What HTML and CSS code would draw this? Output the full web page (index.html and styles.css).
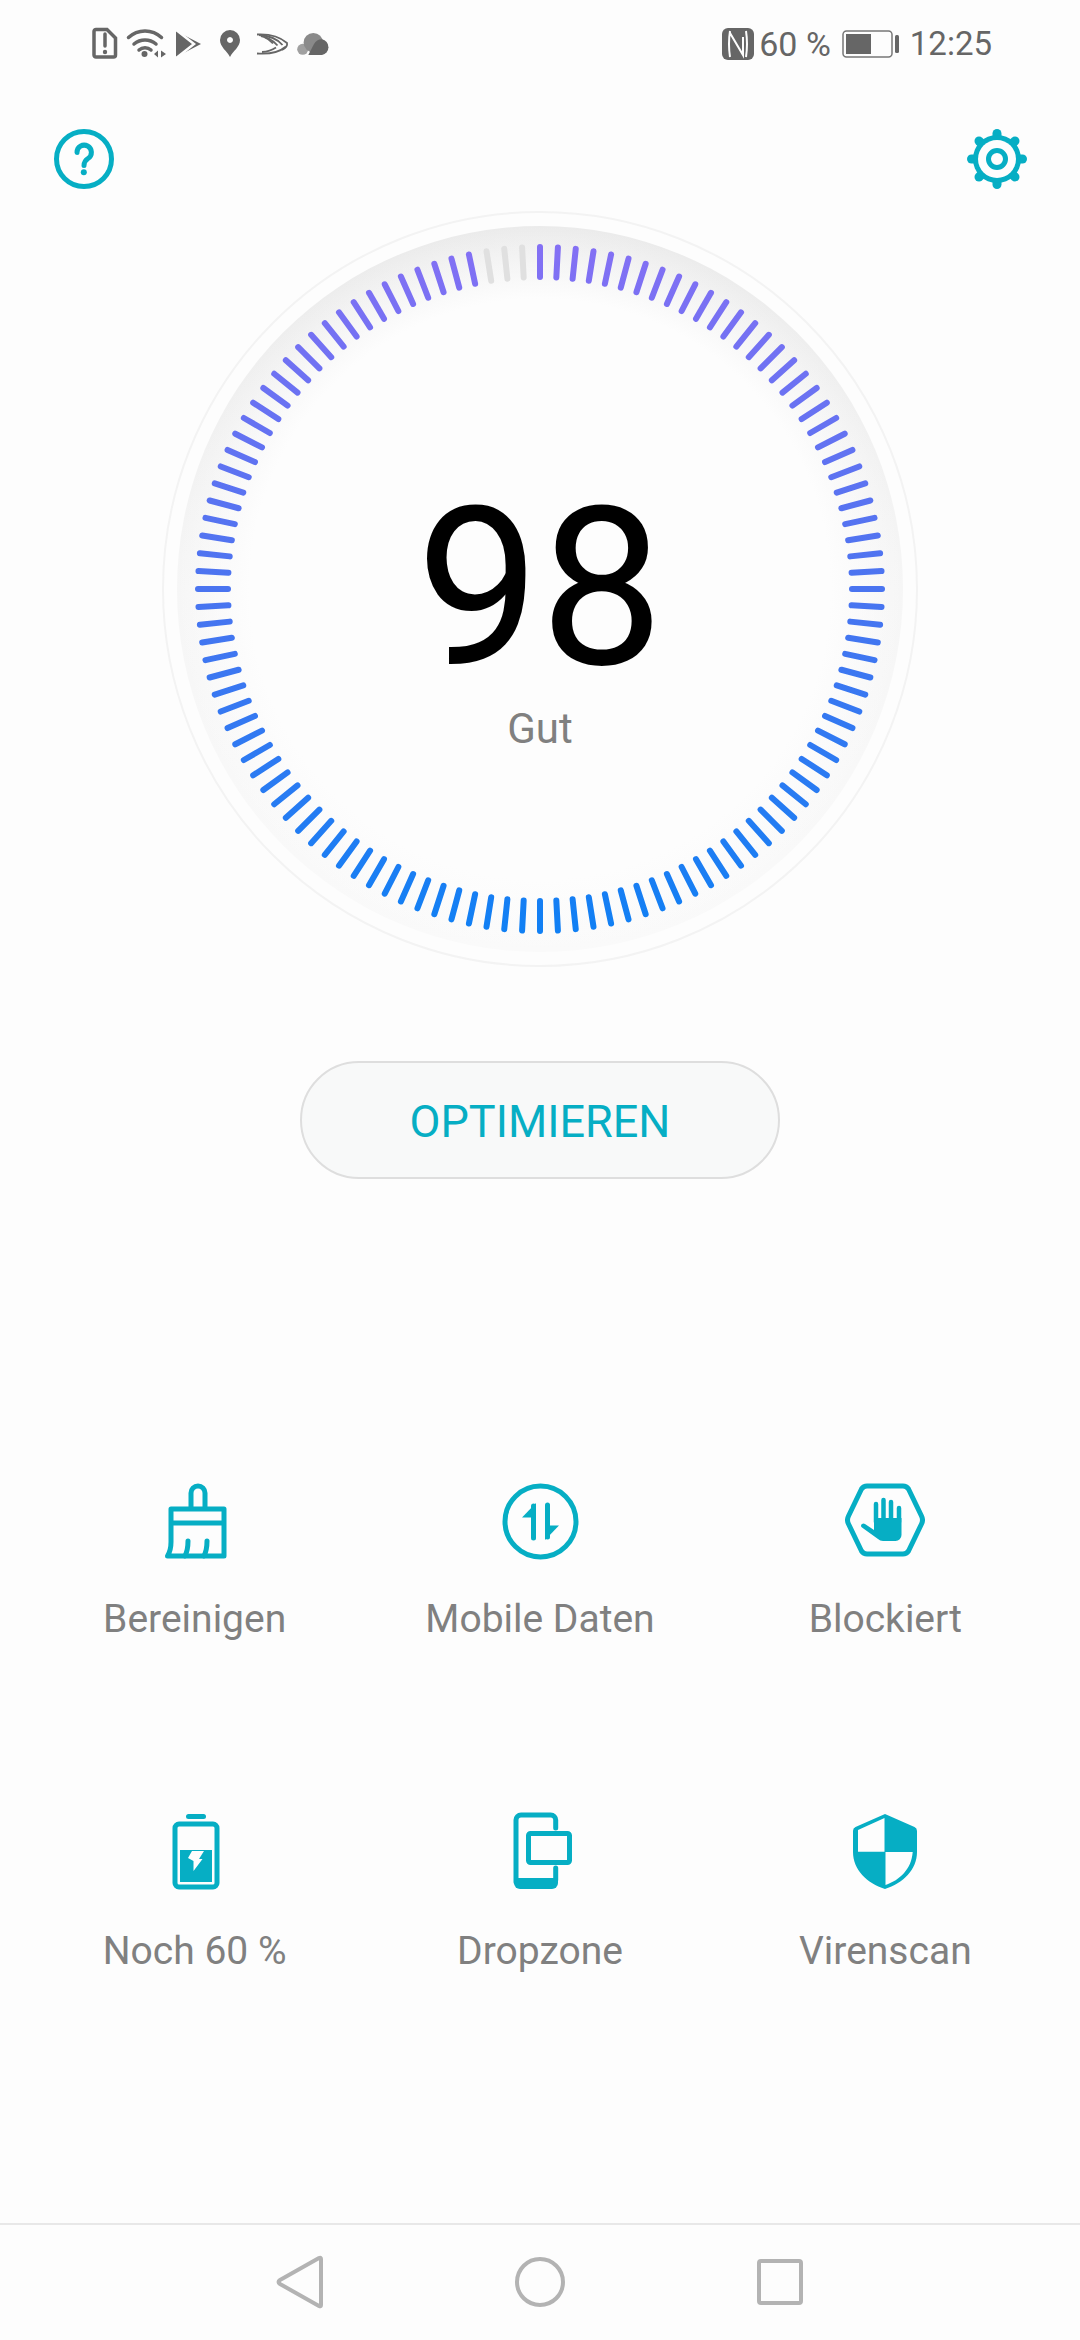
FILE: index.html
```html
<!DOCTYPE html>
<html lang="de">
<head>
    <meta charset="UTF-8">
    <meta name="viewport" content="width=device-width, initial-scale=1.0">
    <title>Telefonmanager</title>
    <link rel="stylesheet" href="styles.css">
</head>
<body>
    <!-- Status bar -->
    <header class="status-bar">
        <svg class="status-icons" viewBox="0 0 240 40" aria-hidden="true">
            <!-- SIM alert -->
            <path class="st-line" d="M4 5.500 H15 L23.500 14 V31 a2 2 0 0 1 -2 2 H4 a2 2 0 0 1 -2 -2 V7.500 a2 2 0 0 1 2 -2 Z"/>
            <path class="st-line" d="M13 10 V22"/>
            <circle class="st-fill" cx="13" cy="28" r="2.200"/>
            <!-- Wifi -->
            <path class="st-line" d="M36.500 13.500 a24 24 0 0 1 33 0"/>
            <path class="st-line" d="M42 20 a17 17 0 0 1 22 0"/>
            <path class="st-line" d="M47 26 a9 9 0 0 1 12 0"/>
            <circle class="st-fill" cx="52.500" cy="30" r="3"/>
            <path class="st-fill" d="M62 30 L66 26.500 V33.500 Z M69 26.500 L74 30 L69 33.500 Z"/>
            <!-- Play store -->
            <path class="st-fill" d="M84 7 L109 20 L84 33 Z"/>
            <path class="st-cut" d="M83 5 L102 20 L83 35"/>
            <!-- Location pin -->
            <path class="st-fill" fill-rule="evenodd" d="M138 6 a10 10 0 0 1 10 10 c0 7 -7 11 -10 17 c-3 -6 -10 -10 -10 -17 a10 10 0 0 1 10 -10 Z M138 13 a3 3 0 1 0 0.010 0 Z"/>
            <!-- Keyboard app -->
            <path class="st-thin" d="M165 10.500 Q184 9.500 195 19 Q196 23 190 26"/>
            <path class="st-thin" d="M167 11 Q183 12 190.500 21"/>
            <path class="st-thin" d="M169 12 Q179 14 185.500 21.500"/>
            <path class="st-thin" d="M172 13 Q177 15 181 19.500"/>
            <path class="st-thin" d="M165 29.500 Q184 31 194 22.500"/>
            <path class="st-thin" d="M170 28 Q178 27.500 184 23.500"/>
            <!-- Cloud -->
            <circle class="st-soft" cx="210.700" cy="25.300" r="5.500"/>
            <circle class="st-mid" cx="221.300" cy="18.700" r="9.700"/>
            <path class="st-fill" d="M216.300 31 L222 20 a9 9 0 0 1 8 -4.700 a8 8 0 0 1 0 15.700 Z"/>
        </svg>
        <div class="status-right">
            <svg class="nfc-icon" viewBox="0 0 32 32" aria-hidden="true">
                <rect class="st-fill" width="32" height="32" rx="6"/>
                <path class="nfc-cut" d="M8 3 Q6 16 8 29 M8 5 L21 27 V9 M24 3 Q26 16 24 29"/>
            </svg>
            <span class="status-text battery-text">60 %</span>
            <svg class="battery-icon" viewBox="0 0 58 28" aria-hidden="true">
                <rect class="battery-shell" x="1" y="1" width="49" height="26" rx="3.500"/>
                <rect class="st-fill" x="4" y="4" width="25" height="20"/>
                <rect class="st-fill" x="53" y="5" width="4" height="18" rx="1.500"/>
            </svg>
            <span class="status-text clock">12:25</span>
        </div>
    </header>

    <main class="main">
        <!-- Help and settings -->
        <div class="top-actions">
            <svg class="action-icon" viewBox="0 0 64 64" aria-hidden="true">
                <circle class="line" cx="32" cy="32" r="27.500"/>
                <path class="line" d="M25 25.500 a7.200 7.200 0 1 1 11 6 c-3 2 -4 3.500 -4 7"/>
                <circle class="solid" cx="31.800" cy="45.300" r="3"/>
            </svg>
            <svg class="action-icon" viewBox="0 0 64 64" aria-hidden="true">
                <g class="gear-teeth">
                    <path d="M32 6.500 V57.500"/>
                    <path d="M6.500 32 H57.500"/>
                    <path d="M14 14 L50 50"/>
                    <path d="M50 14 L14 50"/>
                </g>
                <circle class="solid" cx="32" cy="32" r="24"/>
                <circle class="gear-hole" cx="32" cy="32" r="19"/>
                <circle class="gear-ring" cx="32" cy="32" r="8.500"/>
            </svg>
        </div>

        <!-- Score gauge -->
        <section class="gauge">
            <svg class="gauge-dial" id="gauge-dial" viewBox="0 0 780 780" aria-hidden="true">
                <defs>
                    <linearGradient id="tickGradient" gradientUnits="userSpaceOnUse" x1="0" y1="45" x2="0" y2="735">
                        <stop offset="0" stop-color="#8470f4"/>
                        <stop offset="0.5" stop-color="#4a74f0"/>
                        <stop offset="1" stop-color="#1080f4"/>
                    </linearGradient>
                    <linearGradient id="bandGradient" x1="0" y1="0" x2="0" y2="1">
                        <stop offset="0" stop-color="#ebebeb"/>
                        <stop offset="0.5" stop-color="#f6f6f6"/>
                        <stop offset="1" stop-color="#fafafa"/>
                    </linearGradient>
                    <radialGradient id="bandFade">
                        <stop offset="0.8" stop-color="#fdfdfd"/>
                        <stop offset="1" stop-color="#fdfdfd" stop-opacity="0"/>
                    </radialGradient>
                </defs>
                <circle class="gauge-outline" cx="390" cy="390" r="377"/>
                <circle cx="390" cy="390" r="363" fill="url(#bandGradient)"/>
                <circle cx="390" cy="390" r="363" fill="url(#bandFade)"/>
            </svg>
            <div class="gauge-score">
                <span class="score-value">98</span>
                <span class="score-label">Gut</span>
            </div>
        </section>

        <button class="optimize-btn" type="button">OPTIMIEREN</button>

        <!-- Feature shortcuts -->
        <section class="tools">
            <div class="tool">
                <svg class="tool-icon" viewBox="0 0 80 80" aria-hidden="true">
                    <path class="line" d="M36 27 V13 a7 7 0 0 1 14 0 V27"/>
                    <path class="line" d="M16 43 V29 H69 V76 H12.500 C15 72 16 67 16 62 V43 H69"/>
                    <path class="line" d="M33 61 c0 6 -1 11 -3 15"/>
                    <path class="line" d="M52 61 c0 6 -1 11 -3 15"/>
                </svg>
                <span class="tool-label">Bereinigen</span>
            </div>
            <div class="tool">
                <svg class="tool-icon" viewBox="0 0 80 80" aria-hidden="true">
                    <circle class="line" cx="40.500" cy="41.500" r="35.500"/>
                    <path class="line" d="M33.500 26 V58"/>
                    <path class="solid" d="M36 23 L22 37.500 H36 Z"/>
                    <path class="line" d="M47.500 25 V57"/>
                    <path class="solid" d="M45 60 L59 45.500 H45 Z"/>
                </svg>
                <span class="tool-label">Mobile Daten</span>
            </div>
            <div class="tool">
                <svg class="tool-icon" viewBox="0 0 80 80" aria-hidden="true">
                    <path class="line" d="M16.500 9 Q18.500 6 22 6 H58 Q61.500 6 63.500 9 L76.500 36 Q78.500 40 76.500 44 L63.500 71 Q61.500 74 58 74 H22 Q18.500 74 16.500 71 L3.500 44 Q1.500 40 3.500 36 Z"/>
                    <path class="hand-finger" d="M31 24 V42 M38.500 20 V42 M46 22 V42 M54 28 V42"/>
                    <path class="solid" d="M29 38 H56.500 V55 a6 6 0 0 1 -6 6 H38 q-3 0 -5 -2 L17 47.500 q-2 -2 0 -3.500 q1.500 -1 3 0 L29 50 Z"/>
                </svg>
                <span class="tool-label">Blockiert</span>
            </div>
            <div class="tool">
                <svg class="tool-icon" viewBox="0 0 80 80" aria-hidden="true">
                    <rect class="solid" x="31" y="2" width="20" height="5" rx="2.500"/>
                    <rect class="line" x="20" y="12" width="42" height="63" rx="4"/>
                    <path class="solid" fill-rule="evenodd" d="M25 38 H57 V70 H25 Z M37 39 L33 46 L38.500 49 L38.500 59 L47.500 47 L44 47 L49 39 Z"/>
                </svg>
                <span class="tool-label">Noch 60 %</span>
            </div>
            <div class="tool">
                <svg class="tool-icon" viewBox="0 0 80 80" aria-hidden="true">
                    <path class="line" d="M55.700 16 V8 a5 5 0 0 0 -5 -5 H21 a5 5 0 0 0 -5 5 V70 M55.700 56 V68"/>
                    <path class="solid" d="M14 66 H58 V71 a6 6 0 0 1 -6 6 H20 a6 6 0 0 1 -6 -6 Z"/>
                    <rect class="line" x="28.500" y="21.500" width="41" height="29" rx="2"/>
                </svg>
                <span class="tool-label">Dropzone</span>
            </div>
            <div class="tool">
                <svg class="tool-icon" viewBox="0 0 80 80" aria-hidden="true">
                    <path class="solid" d="M40 2 L69.500 15 Q72 16 72 19 V40 C72 58 58 71 40 77 C22 71 8 58 8 40 V19 Q8 16 10.500 15 Z"/>
                    <path class="shield-cut" d="M39.500 6 L13 18 V39.700 H39.500 Z M40.500 40 H67.700 C66.500 57 55 68 40.500 73 Z"/>
                </svg>
                <span class="tool-label">Virenscan</span>
            </div>
        </section>
    </main>

    <!-- Navigation bar -->
    <nav class="nav-bar">
        <svg class="nav-icon" viewBox="0 0 60 60" aria-hidden="true">
            <path class="nav-line" d="M49 6 Q51 5 51 7 V53 Q51 55 49 54 L10 32 Q7 30 10 28 Z"/>
        </svg>
        <svg class="nav-icon" viewBox="0 0 60 60" aria-hidden="true">
            <circle class="nav-line" cx="30" cy="30" r="23"/>
        </svg>
        <svg class="nav-icon" viewBox="0 0 60 60" aria-hidden="true">
            <rect class="nav-line" x="9" y="9" width="42" height="42" rx="2"/>
        </svg>
    </nav>

    <script src="gauge.js"></script>
</body>
</html>
```

FILE: styles.css
```css
/* Reset and base styles */
*,
*::before,
*::after {
    margin: 0;
    padding: 0;
    box-sizing: border-box;
}

body {
    width: 1080px;
    height: 2340px;
    display: flex;
    flex-direction: column;
    font-family: 'Roboto', 'Liberation Sans', sans-serif;
    background: #fdfdfd;
    color: #808080;
    overflow: hidden;
}

/* Status bar */
.status-bar {
    height: 88px;
    padding: 0 88px 0 92px;
    display: flex;
    align-items: center;
    justify-content: space-between;
    color: #666;
}

.status-icons {
    width: 240px;
    height: 40px;
}

.status-right {
    display: flex;
    align-items: center;
}

.status-text {
    font-size: 33px;
    line-height: 40px;
}

.battery-text {
    font-size: 34px;
}

.nfc-icon {
    width: 32px;
    height: 32px;
    margin-right: 5px;
}

.battery-icon {
    width: 58px;
    height: 28px;
    margin: 0 10px 0 11px;
}

.st-fill { fill: #666; }
.st-mid { fill: #8a8a8a; }
.st-soft { fill: #a0a0a0; }

.st-line {
    fill: none;
    stroke: #666;
    stroke-width: 3.5;
    stroke-linecap: round;
}

.st-thin {
    fill: none;
    stroke: #666;
    stroke-width: 1.8;
}

.st-cut {
    fill: none;
    stroke: #fdfdfd;
    stroke-width: 2.5;
}

.nfc-cut {
    fill: none;
    stroke: #fdfdfd;
    stroke-width: 2;
}

.battery-shell {
    fill: none;
    stroke: #777;
    stroke-width: 1.5;
}

/* Shared icon parts */
.line {
    fill: none;
    stroke: #06aec4;
    stroke-width: 5;
    stroke-linecap: round;
    stroke-linejoin: round;
}

.solid {
    fill: #06aec4;
}

/* Main content */
.main {
    flex: 1;
    display: flex;
    flex-direction: column;
    align-items: center;
}

.top-actions {
    width: 100%;
    margin-top: 39px;
    padding: 0 51px 0 52px;
    display: flex;
    justify-content: space-between;
}

.action-icon {
    width: 64px;
    height: 64px;
}

.gear-teeth {
    fill: none;
    stroke: #06aec4;
    stroke-width: 9;
    stroke-linecap: round;
}

.gear-hole {
    fill: #fdfdfd;
}

.gear-ring {
    fill: none;
    stroke: #06aec4;
    stroke-width: 5;
}

/* Score gauge */
.gauge {
    width: 780px;
    height: 780px;
    margin-top: 8px;
    display: grid;
}

.gauge-dial,
.gauge-score {
    grid-area: 1 / 1;
}

.gauge-dial {
    width: 780px;
    height: 780px;
}

.gauge-outline {
    fill: none;
    stroke: #f3f3f3;
    stroke-width: 2;
}

.gauge-tick {
    stroke-width: 6;
    stroke-linecap: round;
}

.gauge-score {
    display: flex;
    flex-direction: column;
    align-items: center;
    padding-top: 280px;
}

.score-value {
    font-size: 220px;
    font-weight: 400;
    line-height: 220px;
    color: #000;
}

.score-label {
    font-size: 42px;
    line-height: 48px;
    margin-top: 6px;
}

/* Optimize button */
.optimize-btn {
    width: 480px;
    height: 118px;
    margin-top: 82px;
    padding-top: 2px;
    border: 2px solid #dedede;
    border-radius: 59px;
    background: #f8f9f9;
    font-family: inherit;
    font-size: 45px;
    color: #06aec4;
}

/* Feature shortcuts */
.tools {
    width: 1036px;
    margin-top: 301px;
    display: grid;
    grid-template-columns: repeat(3, 1fr);
    row-gap: 169px;
}

.tool {
    display: flex;
    flex-direction: column;
    align-items: center;
    gap: 35px;
}

.tool-icon {
    width: 80px;
    height: 80px;
}

.tool-label {
    font-size: 39px;
    line-height: 48px;
}

.hand-finger {
    fill: none;
    stroke: #06aec4;
    stroke-width: 4.5;
    stroke-linecap: round;
}

.shield-cut {
    fill: #fdfdfd;
}

/* Navigation bar */
.nav-bar {
    height: 117px;
    padding-bottom: 2px;
    border-top: 2px solid #e8e8e8;
    display: flex;
    justify-content: center;
    align-items: center;
    gap: 180px;
}

.nav-icon {
    width: 60px;
    height: 60px;
}

.nav-line {
    fill: none;
    stroke: #b3b3b3;
    stroke-width: 4;
    stroke-linejoin: round;
}
```

FILE: gauge.js
```js
// Draws the 120 ticks of the score dial, the last three stay grey
var SVG_NS = 'http://www.w3.org/2000/svg';
var dial = document.getElementById('gauge-dial');
var TICKS = 120;
var ACTIVE = 117;

for (var i = 0; i < TICKS; i++) {
    var angle = i * 2 * Math.PI / TICKS;
    var sin = Math.sin(angle);
    var cos = Math.cos(angle);
    var tick = document.createElementNS(SVG_NS, 'line');
    tick.setAttribute('x1', 390 + 342 * sin);
    tick.setAttribute('y1', 390 - 342 * cos);
    tick.setAttribute('x2', 390 + 312 * sin);
    tick.setAttribute('y2', 390 - 312 * cos);
    tick.setAttribute('class', 'gauge-tick');
    tick.setAttribute('stroke', i < ACTIVE ? 'url(#tickGradient)' : '#e0e0e0');
    dial.appendChild(tick);
}
```
